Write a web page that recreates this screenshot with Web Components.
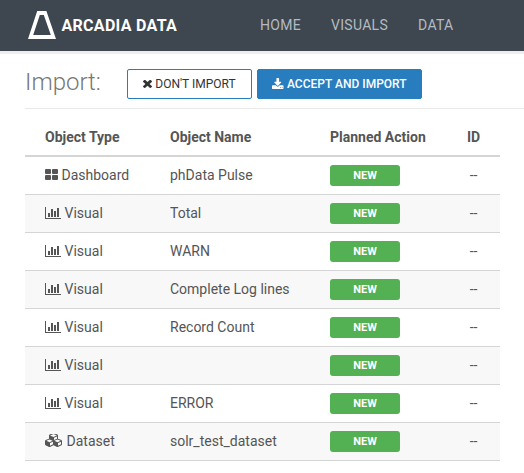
<!DOCTYPE html>
<html lang="en"><head><meta charset="utf-8"><title>Import</title>
<style>
html,body{margin:0;background:#fff}
body{width:524px;height:473px;overflow:hidden;font-family:Roboto,"Liberation Sans",sans-serif;color:#555}
</style></head><body>
<import-page></import-page>
<script>
const define=(name,html,extra)=>customElements.define(name,class extends HTMLElement{
 constructor(){super();const t=document.createElement('template');t.innerHTML=html;this.attachShadow({mode:'open'}).append(t.content.cloneNode(true));}
 connectedCallback(){if(extra)extra(this,this.shadowRoot);}
});
const icons={
 times:['302 238 1188 1316',9,9,'M1490 1322q0 40-28 68l-136 136q-28 28-68 28t-68-28l-294-294-294 294q-28 28-68 28t-68-28l-136-136q-28-28-28-68t28-68l294-294-294-294q-28-28-28-68t28-68l136-136q28-28 68-28t68 28l294 294 294-294q28-28 68-28t68 28l136 136q28 28 28 68t-28 68l-294 294 294 294q28 28 28 68z'],
 download:['64 0 1664 1536',11.5,11,'M1344 1344q0-26-19-45t-45-19-45 19-19 45 19 45 45 19 45-19 19-45zm256 0q0-26-19-45t-45-19-45 19-19 45 19 45 45 19 45-19 19-45zm128-224v320q0 40-28 68t-68 28h-1472q-40 0-68-28t-28-68v-320q0-40 28-68t68-28h465l135 136q58 56 136 56t136-56l136-136h464q40 0 68 28t28 68zm-325-569q17 41-14 70l-448 448q-18 19-45 19t-45-19l-448-448q-31-29-14-70 17-39 59-39h256v-448q0-26 19-45t45-19h256q26 0 45 19t19 45v448h256q42 0 59 39z'],
 Dashboard:['0 0 13 11',13,11,'M1 0h4q1 0 1 1v3q0 1-1 1h-4q-1 0-1-1v-3q0-1 1-1zM8 0h4q1 0 1 1v3q0 1-1 1h-4q-1 0-1-1v-3q0-1 1-1zM1 6h4q1 0 1 1v3q0 1-1 1h-4q-1 0-1-1v-3q0-1 1-1zM8 6h4q1 0 1 1v3q0 1-1 1h-4q-1 0-1-1v-3q0-1 1-1z'],
 Visual:['0 0 16 12',16,12,'M0 0h1v11h15v1H0zM3 6h2v4H3zM6 2h2v8H6zM9 4h2v6H9zM12 1h2v9h-2z'],
 Dataset:['0 128 2304 1664',18,13,'M640 1632l384-192v-314l-384 164v342zm-64-454l404-173-404-173-404 173zm1088 454l384-192v-314l-384 164v342zm-64-454l404-173-404-173-404 173zm-448-293l384-165v-266l-384 164v267zm-64-379l441-189-441-189-441 189zm1088 518v416q0 36-19 67t-52 47l-448 224q-25 14-57 14t-57-14l-448-224q-4-2-7-4-2 2-7 4l-448 224q-25 14-57 14t-57-14l-448-224q-33-16-52-47t-19-67v-416q0-38 21.5-70t56.5-48l434-186v-400q0-38 21.5-70t56.5-48l448-192q23-10 50-10t50 10l448 192q35 16 56.5 48t21.5 70v400l434 186q36 16 57 48t21 70z']
};
define('ui-icon','<style>:host{display:block;flex:none}svg{display:block;fill:currentColor}</style><svg preserveAspectRatio="none"><path/></svg>',(e,r)=>{
 const [v,w,h,d]=icons[e.getAttribute('name')],s=r.querySelector('svg');
 s.setAttribute('viewBox',v);s.setAttribute('width',w);s.setAttribute('height',h);s.style.marginBottom=(h%2)+'px';s.firstElementChild.setAttribute('d',d);
});
define('arcadia-logo',`<style>:host{display:flex;align-items:center;width:232px;height:50px;box-sizing:border-box;padding-left:28px;color:#fff}
svg{display:block;flex:none}span{font:700 16px/20px Roboto,sans-serif;margin:2px 0 0 5.5px;letter-spacing:.3px;white-space:nowrap}</style>
<svg width="28" height="28" viewBox="0 0 28 28"><path fill="#fff" fill-rule="evenodd" d="M9.2 0h9.2L28 28H0zM11.8 4L5.2 24h17.6L15.8 4z"/></svg><span>ARCADIA DATA</span>`);
define('top-bar',`<style>:host{display:flex;height:51px;background:#3e474f;border-bottom:3px solid #eee}
nav{display:flex;gap:30px;padding-left:28px;font-size:14px;line-height:51px;color:#b3bbc2;letter-spacing:.3px}</style>
<arcadia-logo></arcadia-logo><nav><span>HOME</span><span>VISUALS</span><span>DATA</span></nav>`);
define('ui-button',`<style>:host{display:flex;box-sizing:border-box;height:30px;align-items:center;justify-content:center;gap:3px;border:1px solid #287dbe;border-radius:2px;font-size:12px;line-height:28px;color:#333;white-space:nowrap;width:125px}
:host([primary]){background:#287dbe;color:#fff;width:165px;font-weight:500}</style><slot name="icon"></slot><span><slot></slot></span>`);
define('page-heading',`<style>:host{display:flex;box-sizing:border-box;height:55px;margin-left:25px;border-bottom:1px solid #e9e9e9;padding-top:15px;gap:5px}
h1{margin:0;width:97px;font:300 24px/26px Roboto,sans-serif;color:#777}</style>
<h1>Import:</h1><ui-button><ui-icon slot="icon" name="times"></ui-icon>DON'T IMPORT</ui-button><ui-button primary><ui-icon slot="icon" name="download"></ui-icon>ACCEPT AND IMPORT</ui-button>`);
define('status-badge',`<style>:host{display:block;width:70px;height:21px;border-radius:3px;background:#53b053;color:#fff;font:700 11px/22px Roboto,sans-serif;text-align:center}</style><slot></slot>`);
define('object-row',`<style>:host{display:grid;grid-template-columns:125px 160px 119px 49px;box-sizing:border-box;height:38px;padding-left:20px;border-bottom:1px solid #d5d5d5;font-size:14px;line-height:36px}
:host(:nth-of-type(odd)){background:#f8f8f8}
:host([head]){background:#fff;font-weight:700;border-bottom-width:2px}
div{white-space:nowrap}.t{display:flex;align-items:center;gap:3.5px;height:36px}.s{display:flex;align-items:center}.i{text-align:center}</style>
<div class="t"></div><div class="n"></div><div class="s"></div><div class="i"></div>`,(e,r)=>{
 const [t,n,s,i]=r.querySelectorAll('div'),type=e.getAttribute('type');
 if(e.hasAttribute('head')){t.textContent='Object Type';n.textContent='Object Name';s.textContent='Planned Action';i.textContent='ID';return;}
 const icon=document.createElement('ui-icon'),label=document.createElement('span');
 icon.setAttribute('name',type);label.textContent=type;t.append(icon,label);
 n.textContent=e.getAttribute('name');
 const badge=document.createElement('status-badge');badge.textContent='NEW';s.append(badge);
 i.textContent='--';
});
define('object-table',`<style>:host{display:block;margin:10px 24px 0 25px}</style>
<object-row head></object-row><object-row type="Dashboard" name="phData Pulse"></object-row><object-row type="Visual" name="Total"></object-row><object-row type="Visual" name="WARN"></object-row><object-row type="Visual" name="Complete Log lines"></object-row><object-row type="Visual" name="Record Count"></object-row><object-row type="Visual" name=""></object-row><object-row type="Visual" name="ERROR"></object-row><object-row type="Dataset" name="solr_test_dataset"></object-row>`);
define('import-page','<style>:host{display:block}</style><top-bar></top-bar><page-heading></page-heading><object-table></object-table>');
</script></body></html>
